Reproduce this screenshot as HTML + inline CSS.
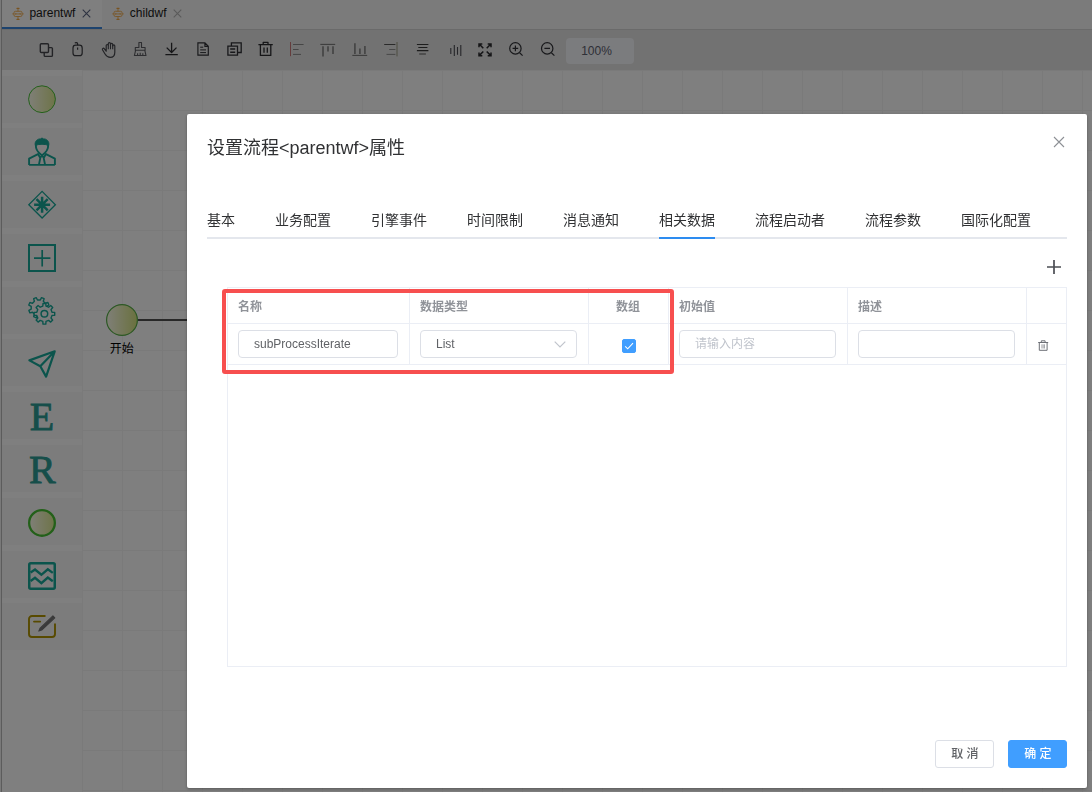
<!DOCTYPE html>
<html lang="zh-CN">
<head>
<meta charset="utf-8">
<title>流程设计器 - parentwf</title>
<style>
html,body{margin:0;padding:0}
body{width:1092px;height:792px;overflow:hidden;position:relative;background:#fff;font-family:"Liberation Sans",sans-serif;font-size:12px;color:#303133}
*{box-sizing:border-box}
.abs{position:absolute}
/* real text labels */
.gt{position:absolute;display:block;white-space:nowrap;line-height:1;overflow:visible;font-family:"Liberation Sans","Noto Sans CJK SC",sans-serif}
.gt .tx{position:absolute;left:0;top:0;line-height:inherit;white-space:nowrap}

/* ---------- application behind the modal ---------- */
#app{position:absolute;left:0;top:0;width:1092px;height:792px;background:#fff;overflow:hidden}
.edge{position:absolute;left:0;top:0;width:2px;height:792px;background:#f2f2f2;border-right:1px solid #b8b8b8}
.wftabs{position:absolute;left:2px;top:0;width:1090px;height:30px;background:#f6f6f6;border-bottom:1px solid #d4d4d4}
.wftab{position:absolute;top:0;height:29px;font-size:12px;color:#1a1a1a;line-height:27px}
.wftab.on{left:0;width:100px;background:#fff;border-bottom:2px solid #3a86dc}
.wftab .lbl{position:absolute;top:0}
.toolbar{position:absolute;left:2px;top:30px;width:1090px;height:40px;background:#e4e4e4}
.zoombox{position:absolute;left:564px;top:8px;width:68px;height:26px;border-radius:4px;background:#f7f8fc;color:#5c6070;font-size:12px;line-height:26px;text-align:center;padding-right:7px}
.palette{position:absolute;left:2px;top:70px;width:80px;height:722px;background:#fff}
.tile{position:absolute;left:0;width:80px;height:47px;background:#f9f9f9}
.canvas{position:absolute;left:82px;top:70px;width:1010px;height:722px;background-color:#fff;
  background-image:linear-gradient(to right,#f5f5f5 1px,transparent 1px),linear-gradient(to bottom,#f5f5f5 1px,transparent 1px);
  background-size:40px 40px;background-position:0 0}
.mask{position:absolute;left:0;top:0;width:1092px;height:792px;background:#000;opacity:.5}

/* ---------- dialog ---------- */
.dialog{position:absolute;left:187px;top:114px;width:900px;height:674px;background:#fff;border-radius:2px;box-shadow:0 1px 3px rgba(0,0,0,.3);will-change:transform}
.dtitle{color:#303133}
.dclose{position:absolute;left:866px;top:22px;width:12px;height:12px}
.tabline{position:absolute;left:20px;top:123px;width:860px;height:2px;background:#e4e7ed}
.tabbar{position:absolute;left:472px;top:123px;width:56px;height:2px;background:#2d8cf0}
.tabs .gt{color:#303133}
.tbl{position:absolute;left:40px;top:173px;width:840px;height:380px;border:1px solid #ebeef5}
.hl{position:absolute;background:#ebeef5;height:1px;left:0;width:838px}
.vl{position:absolute;background:#ebeef5;width:1px;top:0;height:77px}
.th .gt{color:#909399;font-weight:bold}
.inp{position:absolute;height:28px;border:1px solid #dcdfe6;border-radius:4px;background:#fff;font-size:12px;color:#606266;line-height:26px;padding:0 15px;white-space:nowrap}
.ph{color:#c0c4cc}
.chk{position:absolute;width:14px;height:14px;border-radius:2px;background:#409eff;border:1px solid #409eff}
.redbox{position:absolute;left:35px;top:175px;width:452px;height:85px;border:4px solid #f74f4f;border-radius:3px}
.btn{position:absolute;top:626px;width:59px;height:28px;border-radius:3px;font-size:12px}
.btn .gt{font-weight:500}
.btn.cancel{left:748px;border:1px solid #dcdfe6;background:#fff;color:#606266}
.btn.ok{left:821px;background:#409eff;border:1px solid #409eff;color:#fff}
</style>
</head>
<body>
<div id="app">
  <div class="edge"></div>
  <div class="wftabs">
    <div class="wftab on">
    <svg class="abs" style="left:9px;top:7px" width="14" height="14" viewBox="0 0 14 14" fill="none" stroke="#f2a640" stroke-width=".85">
      <rect x="3" y="4.300" width="8" height="5.200" rx="1.400"/>
      <path d="M7 4.300V1.600M7 9.500v2.700M3 6.900H1.300M11 6.900h1.700M7 6v1.800"/>
      <path d="M6 1.400h2M6 12.400h2" stroke-width="1.200" stroke-linecap="round"/>
      <circle cx="4.900" cy="6.900" r=".6"/><circle cx="9.100" cy="6.900" r=".6"/>
    </svg>
      <span class="lbl" style="left:27.4px">parentwf</span>
    <svg class="abs" style="left:79.5px;top:9px" width="9" height="9" viewBox="0 0 9 9" fill="none" stroke="#5c6684" stroke-width="1.1"><path d="M.7.7l7.6 7.6M8.3.7L.7 8.3"/></svg>
    </div>
    <div class="wftab" style="left:100px;width:90px">
    <svg class="abs" style="left:9px;top:7px" width="14" height="14" viewBox="0 0 14 14" fill="none" stroke="#f2a640" stroke-width=".85">
      <rect x="3" y="4.300" width="8" height="5.200" rx="1.400"/>
      <path d="M7 4.300V1.600M7 9.500v2.700M3 6.900H1.300M11 6.900h1.700M7 6v1.800"/>
      <path d="M6 1.400h2M6 12.400h2" stroke-width="1.200" stroke-linecap="round"/>
      <circle cx="4.900" cy="6.900" r=".6"/><circle cx="9.100" cy="6.900" r=".6"/>
    </svg>
      <span class="lbl" style="left:27.8px">childwf</span>
    <svg class="abs" style="left:70.5px;top:9px" width="9" height="9" viewBox="0 0 9 9" fill="none" stroke="#b4b4b4" stroke-width="1.1"><path d="M.7.7l7.6 7.6M8.3.7L.7 8.3"/></svg>
    </div>
  </div>
  <div class="toolbar">
    <svg class="abs" style="left:-2px;top:-30px" width="1092" height="70" viewBox="0 0 1092 70" fill="none" stroke="#46474d" stroke-width="1.4" stroke-linejoin="round">
      <!-- copy -->
      <rect x="44.2" y="47.6" width="8.2" height="8.8" rx="1"/><rect x="40.3" y="43.7" width="8.2" height="8.8" rx="1" fill="#e4e4e4"/>
      <!-- mouse -->
      <rect x="73" y="45.2" width="9.200" height="10.500" rx="2.800" stroke="#3c3d42" stroke-width="1.2"/><path d="M77.6 45.2v-1.4c0-1.4-2.2-1.6-2.6-.6M77.6 47.4v2.4" stroke="#3c3d42" stroke-width="1.2"/>
      <!-- hand -->
      <path d="M106.2 51.2v-5.6c0-1.5 2.1-1.5 2.1 0v-1.8c0-1.5 2.2-1.5 2.2 0v.6c0-1.5 2.2-1.5 2.2 0v1.6c0-1.4 2.1-1.4 2.1 0v6.2c0 3.4-1.6 5.2-4.6 5.2-2.6 0-3.6-1-5-3.2l-2.6-4.2c-.8-1.4.8-2.4 1.8-1.2z" stroke-width="1.2"/>
      <path d="M108.3 45.6v3.6M110.5 44.4v4.8M112.7 45v4.2" stroke-width="1.1"/>
      <!-- brush -->
      <path d="M138.9 42.5h2.6v5h3.6v2.8h-9.8v-2.8h3.6zM135.6 50.3l-1.2 5.2h11.6l-1.2-5.2M137.6 55.5v-2.2M140.2 55.5v-2.8M142.8 55.5v-2.2" stroke="#5a5b60" stroke-width="1.1"/>
      <!-- download -->
      <path d="M171.6 42.8v9.6M166.7 47.6l4.9 4.9 4.9-4.9M165.4 54.7h12.4" stroke="#2c2d31" stroke-width="1.3"/>
      <!-- document -->
      <path d="M197.9 42.9h7l3.4 3.4v8.8h-10.400zM204.9 42.9v3.4h3.4" stroke="#303136" stroke-width="1.150" stroke-linejoin="miter"/><path d="M200.200 47.200h3M200.200 49.900h5.800M200.200 52.600h5.800" stroke="#303136" stroke-width="1"/>
      <!-- document copy -->
      <path d="M227.9 46.2h9.6v9h-9.600zM231.400 46v-3.100h9.800v9.600h-3.500" stroke="#303136" stroke-width="1.300" stroke-linejoin="miter"/><path d="M230.2 49h5M230.2 52.2h5" stroke="#303136" stroke-width="1.6"/>
      <!-- trash -->
      <path d="M258.4 44.6h14.4M263.2 44.4v-2h4.8v2M260.4 44.8v10.6h10.4V44.8M264 47.6v5.2M267.3 47.6v5.2" stroke="#2c2d31" stroke-width="1.3"/>
      <!-- align left -->
      <path d="M290.5 42v14.2" stroke="#c87878" stroke-width="1"/><path d="M293 44.5h10.6M293 49.5h5.6M293 54.4h8" stroke="#8c8c8c" stroke-width="1"/>
      <!-- align top -->
      <path d="M320.3 44.4h14.9" stroke="#7a7a7a" stroke-width="1.1"/><path d="M323 46.2v10.2M328 46.2v5.4M333 46.2v7.7" stroke="#8a8a8a" stroke-width="1.7"/>
      <!-- align bottom -->
      <path d="M352.3 55.4h14.9" stroke="#7a7a7a" stroke-width="1.1"/><path d="M354.9 43.3v10.6M359.9 48.4v5.5M364.9 45.9v8" stroke="#8a8a8a" stroke-width="1.7"/>
      <!-- align right -->
      <path d="M397 42v14.4" stroke="#9a9a80" stroke-width="1"/><path d="M384.2 44.5h11.2" stroke="#555" stroke-width="1"/><path d="M389.2 49.5h6.2M386.5 54.4h8.9" stroke="#909090" stroke-width="1"/>
      <!-- align center -->
      <path d="M416.9 44.5h11.5M418.3 47.5h9.1M416.9 50.6h11.5" stroke="#3a3a3a" stroke-width="1.1"/><path d="M419.2 54h6.7" stroke="#8a8a8a" stroke-width="1.6"/>
      <!-- distribute -->
      <path d="M450.8 47.9v6M454.3 45v11M457.5 47v7.8M460.8 45v11" stroke="#4a4b52" stroke-width="1.100"/>
      <!-- full screen -->
      <g stroke="#2a2a2e" stroke-width="1.500" stroke-linejoin="miter"><path d="M479 47.2V43.9h3.3M479.4 44.3l3.9 3.9M487.7 43.9H491v3.3M490.6 44.3l-3.9 3.9M479 52.5v3.3h3.3M479.4 55.4l3.9-3.9M487.7 55.8H491v-3.3M490.6 55.4l-3.9-3.9"/></g>
      <!-- zoom in / out -->
      <circle cx="515.4" cy="48.4" r="5.7" stroke="#303136" stroke-width="1.2"/><path d="M519.600 52.800l3 2.800M512.6 48.4h5.6M515.4 45.6v5.6" stroke="#303136" stroke-width="1.2"/>
      <circle cx="547.2" cy="48.4" r="5.7" stroke="#303136" stroke-width="1.2"/><path d="M551.400 52.800l3 2.800M544.4 48.4h5.600" stroke="#303136" stroke-width="1.2"/>
    </svg>
    <div class="zoombox">100%</div>
  </div>
  <div class="palette">
    <div class="tile" style="top:5.7px"></div><div class="tile" style="top:58.4px"></div><div class="tile" style="top:111.2px"></div><div class="tile" style="top:163.9px"></div><div class="tile" style="top:216.7px"></div><div class="tile" style="top:269.4px"></div><div class="tile" style="top:322.2px"></div><div class="tile" style="top:374.9px"></div><div class="tile" style="top:427.7px"></div><div class="tile" style="top:480.5px"></div><div class="tile" style="top:533.2px"></div>
    <svg class="abs" style="left:0;top:0" width="80" height="722" viewBox="0 0 80 722">
      <defs><linearGradient id="gs" x1="0" y1="0" x2="1" y2="0"><stop offset="0" stop-color="#fffff0"/><stop offset="1" stop-color="#dce890"/></linearGradient></defs>
      <circle cx="40" cy="29.2" r="13.4" fill="url(#gs)" stroke="#48c038" stroke-width="1"/>
      <g transform="translate(26 68.0)" fill="none" stroke="#16a898" stroke-width="1.9" stroke-linejoin="round"><path d="M8 7C7.400 10.600 9.200 13 11.200 15L14 17.400l2.800-2.400c2-2 3.800-4.400 3.200-8"/><path d="M7.300 7.600C6.300 3 9.800.7 12.500.9l1.500-.9 1.500.9c2.700-.2 6.200 2.100 5.200 6.700C18 5.800 10 5.800 7.300 7.600z" fill="#16a898" stroke-width="1"/><path d="M1.100 27V20.700l8.900-4.600 2.200 3.600L14 17.600l1.800 2.100 2.200-3.600 8.900 4.600V27M1.100 26.900h25.800M12.300 19.900l-1.400 7M15.700 19.900l1.400 7"/></g>
      <g transform="translate(40.1 134.7)" fill="none" stroke="#16a898"><path d="M0-13.300L13.300 0 0 13.300-13.300 0z" stroke-width="1.300"/><path d="M0-8V8M-8 0H8M-5.600-5.600L5.600 5.600M5.600-5.600L-5.600 5.600" stroke-width="2.500"/></g>
      <g transform="translate(40 188.0)" fill="none" stroke="#16a898"><rect x="-13" y="-13" width="26" height="26" stroke-width="2"/><path d="M.2-8V8.500M-8 .2H8.400" stroke-width="1.700"/></g>
      <g fill="none" stroke="#16a898" stroke-width="1.400" stroke-linejoin="round"><path d="M44.6 239.1L47.0 240.3L45.9 242.9L43.3 242.1L41.4 244.1L42.1 246.7L39.6 247.7L38.3 245.4L35.5 245.4L34.3 247.8L31.7 246.7L32.5 244.1L30.5 242.2L27.9 242.9L26.9 240.4L29.2 239.1L29.2 236.3L26.8 235.1L27.9 232.5L30.5 233.3L32.4 231.3L31.7 228.7L34.2 227.7L35.5 230.0L38.3 230.0L39.5 227.6L42.1 228.7L41.3 231.3L43.3 233.2L45.9 232.5L46.9 235.0L44.6 236.3Z"/><path d="M50.0 242.2L52.7 242.4L52.7 245.2L50.0 245.4L49.0 248.0L50.7 250.1L48.7 252.1L46.6 250.4L44.0 251.4L43.8 254.1L41.0 254.1L40.8 251.4L38.2 250.4L36.1 252.1L34.1 250.1L35.8 248.0L34.8 245.4L32.1 245.2L32.1 242.4L34.8 242.2L35.8 239.6L34.1 237.5L36.1 235.5L38.2 237.2L40.8 236.2L41.0 233.5L43.8 233.5L44.0 236.2L46.6 237.2L48.7 235.5L50.7 237.5L49.0 239.6Z" fill="#f9f9f9"/><circle cx="42.4" cy="243.8" r="3.300" stroke-width="1.500"/></g>
      <g transform="translate(26 279.5)" fill="none" stroke="#16a898" stroke-width="2.200" stroke-linejoin="round"><path d="M26.700 1.800L1.400 10.900 12.300 16.800 18.100 27.100zM12.300 16.800L26.700 1.800"/></g>
      <text x="39.900" y="359.8" text-anchor="middle" font-family="Liberation Serif,serif" font-size="40" fill="#2c9c94" stroke="#2c9c94" stroke-width=".800">E</text>
      <text x="40.300" y="412.8" text-anchor="middle" font-family="Liberation Serif,serif" font-size="40" fill="#2c9c94" stroke="#2c9c94" stroke-width=".800">R</text>
      <circle cx="40" cy="452.9" r="12.850" fill="url(#gs)" stroke="#46c032" stroke-width="2.300"/>
      <g transform="translate(26 491.9)" fill="none" stroke="#16a898" stroke-linejoin="miter"><rect x="1.250" y="1.250" width="25.500" height="25.500" rx="1.500" stroke-width="2.500"/><path d="M2.600 10.600L7 7.700l6.400 5.200 6.400-5.500 5 3.600M2.600 19L7 15.900l6.400 5.400 6.400-5.600 5 3.600" stroke-width="2.400"/></g>
      <g transform="translate(26 542.5)" fill="none"><path d="M17.500 3.500H4A3 3 0 0 0 1 6.500v15a3 3 0 0 0 3 3h20a3 3 0 0 0 3-3V11" stroke="#b09400" stroke-width="1.900"/><path d="M6 9.100h6.200" stroke="#b09400" stroke-width="1.900" stroke-linecap="round"/><path d="M10.800 18.600l1.300-2.900L24.900 3.400l1.900 1.900L13.700 17.500z" fill="#747474" stroke="#747474" stroke-width="1.100" stroke-linejoin="round"/></g>
    </svg>
  </div>
  <div class="canvas">
    <svg class="abs" style="left:0;top:0" width="1010" height="722" viewBox="0 0 1010 722">
      <defs><linearGradient id="gn" x1="0" y1="0" x2="1" y2="0"><stop offset="0" stop-color="#fffff0"/><stop offset="1" stop-color="#d4e27c"/></linearGradient></defs>
      <path d="M56 250H140" stroke="#505050" stroke-width="2"/>
      <circle cx="40" cy="250" r="15.400" fill="url(#gn)" stroke="#58b048" stroke-width="1.200"/>
    </svg>
    <div class="abs" style="left:27.800px;top:272px;color:#000"><span class="gt" style="width:24.00px;height:14px;font-size:12px;line-height:14px"><span class="tx">开始</span></span></div>
  </div>
</div>
<div class="mask"></div>
<div class="dialog">
  <div class="abs dtitle" style="left:20px;top:24px"><span class="gt" style="width:204.28px;height:20px;font-size:18px;line-height:20px"><span class="tx">设置流程&lt;parentwf&gt;属性</span></span></div>
  <svg class="dclose" viewBox="0 0 12 12" fill="none" stroke="#8d9095" stroke-width="1.1"><path d="M1 1l10 10M11 1L1 11"/></svg>
  <div class="tabs">
    <div class="abs" style="left:20px;top:99px"><span class="gt" style="width:28.00px;height:15px;font-size:14px;line-height:15px"><span class="tx">基本</span></span></div>
    <div class="abs" style="left:88px;top:99px"><span class="gt" style="width:56.00px;height:15px;font-size:14px;line-height:15px"><span class="tx">业务配置</span></span></div>
    <div class="abs" style="left:184px;top:99px"><span class="gt" style="width:56.00px;height:15px;font-size:14px;line-height:15px"><span class="tx">引擎事件</span></span></div>
    <div class="abs" style="left:280px;top:99px"><span class="gt" style="width:56.00px;height:15px;font-size:14px;line-height:15px"><span class="tx">时间限制</span></span></div>
    <div class="abs" style="left:376px;top:99px"><span class="gt" style="width:56.00px;height:15px;font-size:14px;line-height:15px"><span class="tx">消息通知</span></span></div>
    <div class="abs" style="left:472px;top:99px"><span class="gt" style="width:56.00px;height:15px;font-size:14px;line-height:15px"><span class="tx">相关数据</span></span></div>
    <div class="abs" style="left:568px;top:99px"><span class="gt" style="width:70.00px;height:15px;font-size:14px;line-height:15px"><span class="tx">流程启动者</span></span></div>
    <div class="abs" style="left:678px;top:99px"><span class="gt" style="width:56.00px;height:15px;font-size:14px;line-height:15px"><span class="tx">流程参数</span></span></div>
    <div class="abs" style="left:774px;top:99px"><span class="gt" style="width:70.00px;height:15px;font-size:14px;line-height:15px"><span class="tx">国际化配置</span></span></div>
  </div>
  <div class="tabline"></div><div class="tabbar"></div>
  <svg class="abs" style="left:860px;top:146px" width="14" height="14" viewBox="0 0 14 14" fill="none" stroke="#4b4d53" stroke-width="1.7"><path d="M7 0v14M0 7h14"/></svg>
  <div class="tbl">
    <div class="hl" style="top:35px"></div><div class="hl" style="top:76px"></div>
    <div class="vl" style="left:181px"></div><div class="vl" style="left:360px"></div><div class="vl" style="left:440px"></div><div class="vl" style="left:619px"></div><div class="vl" style="left:798px"></div>
    <div class="th">
      <div class="abs" style="left:10px;top:12px"><span class="gt" style="width:24.00px;height:14px;font-size:12px;line-height:14px"><span class="tx">名称</span></span></div>
      <div class="abs" style="left:192px;top:12px"><span class="gt" style="width:48.00px;height:14px;font-size:12px;line-height:14px"><span class="tx">数据类型</span></span></div>
      <div class="abs" style="left:388px;top:12px"><span class="gt" style="width:24.00px;height:14px;font-size:12px;line-height:14px"><span class="tx">数组</span></span></div>
      <div class="abs" style="left:451px;top:12px"><span class="gt" style="width:36.00px;height:14px;font-size:12px;line-height:14px"><span class="tx">初始值</span></span></div>
      <div class="abs" style="left:630px;top:12px"><span class="gt" style="width:24.00px;height:14px;font-size:12px;line-height:14px"><span class="tx">描述</span></span></div>
    </div>
    <div class="inp" style="left:10px;top:42px;width:160px">subProcessIterate</div>
    <div class="inp" style="left:192px;top:42px;width:157px">List
      <svg class="abs" style="left:133px;top:10px" width="12" height="7" viewBox="0 0 12 7" fill="none" stroke="#c0c4cc" stroke-width="1.200"><path d="M.7.7L6 6l5.300-5.300"/></svg>
    </div>
    <div class="chk" style="left:394px;top:51px"><svg class="abs" style="left:0;top:0" width="12" height="12" viewBox="0 0 12 12" fill="none" stroke="#fff" stroke-width="1.100"><path d="M2.200 6.300l2.500 2.500L10 3.100"/></svg></div>
    <div class="inp ph" style="left:451px;top:42px;width:157px"><div class="abs" style="left:15px;top:6px"><span class="gt" style="width:60.00px;height:14px;font-size:12px;line-height:14px"><span class="tx">请输入内容</span></span></div></div>
    <div class="inp" style="left:630px;top:42px;width:157px"></div>
    <svg class="abs" style="left:810px;top:52px" width="11" height="11" viewBox="0 0 11 11" fill="none" stroke="#6c6f75" stroke-width="1"><path d="M.2 2.500h10M3.300 2.300V.800h3.800v1.500M1.300 2.700v7.600h7.800V2.700"/><path d="M3.900 4.300v4.200M5.200 4.300v4.200M6.500 4.300v4.200" stroke-width=".6"/></svg>
  </div>
  <div class="redbox"></div>
  <div class="btn cancel"><div class="abs" style="left:15.200px;top:6px"><span class="gt" style="width:26.70px;height:14px;font-size:12px;line-height:14px"><span class="tx">取 消</span></span></div></div>
  <div class="btn ok"><div class="abs" style="left:15.200px;top:6px"><span class="gt" style="width:26.70px;height:14px;font-size:12px;line-height:14px"><span class="tx">确 定</span></span></div></div>
</div>
</body>
</html>
